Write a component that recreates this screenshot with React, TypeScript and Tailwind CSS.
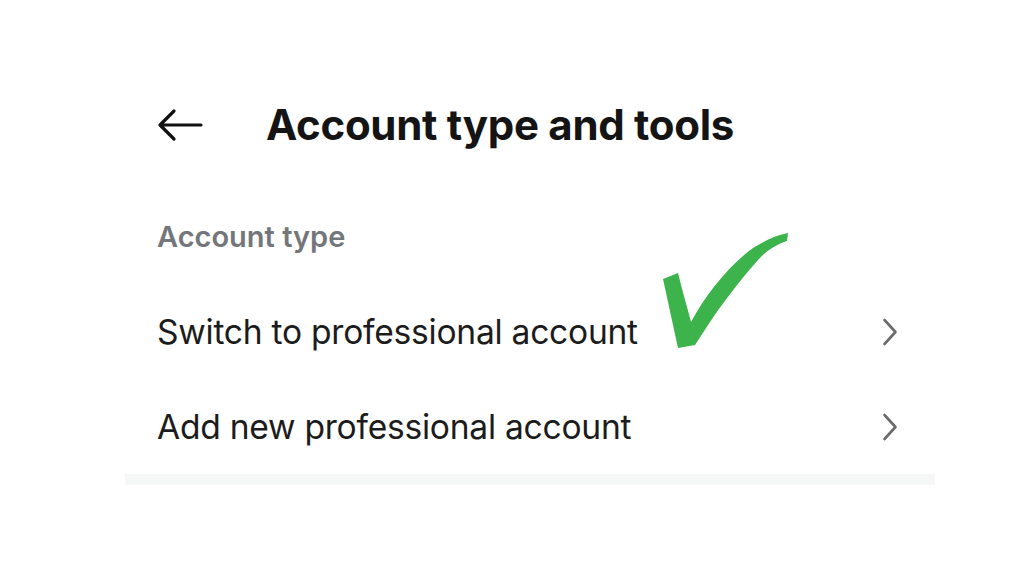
import React from "react";

function Chevron() {
  return (
    <svg width="16" height="28" viewBox="0 0 16 28" fill="none">
      <path d="M2.5 2 L13.5 14 L2.5 26" stroke="#6b6b6b" strokeWidth="2.6" strokeLinecap="round" strokeLinejoin="round" />
    </svg>
  );
}

function Row({ label }: { label: string }) {
  return (
    <div className="flex h-[95px] items-center justify-between pr-[126px]">
      <span className="text-[33.6px] leading-none text-[#1c1c1c] tracking-[-0.25px]">{label}</span>
      <Chevron />
    </div>
  );
}

export default function App() {
  return (
    <div
      className="relative h-[576px] w-[1024px] overflow-hidden bg-white"
      style={{ fontFamily: "Inter, 'Noto Sans', sans-serif" }}
    >
      <div className="flex flex-col pl-[157px]">
        <div className="flex h-[284px] flex-col">
          <div className="mt-[100px] flex h-[50px] items-center">
            <svg width="46" height="34" viewBox="0 0 46 34" fill="none">
              <path d="M44 17 H3 M17 3 L3 17 L17 31" stroke="#111" strokeWidth="3.2" strokeLinecap="round" strokeLinejoin="round" />
            </svg>
            <h1 className="ml-[63px] text-[42px] font-bold leading-none text-[#141414] tracking-[-0.3px]">
              Account type and tools
            </h1>
          </div>
          <div className="mt-[72px] text-[29px] font-semibold leading-none text-[#73777b]">Account type</div>
        </div>
        <div>
          <Row label="Switch to professional account" />
          <Row label="Add new professional account" />
        </div>
      </div>
      <div className="ml-[125px] h-[11px] w-[810px] bg-[#f6f8f8]" />
      <svg
        className="absolute left-[660px] top-[230px]"
        width="132"
        height="124"
        viewBox="0 0 132 124"
      >
        <path
          d="M3 49 L18 43 C22 60 27 76 31 92 C45 66 68 36 93 18 C106 10 117 5 128 3 L127 11 C115 15 105 22 98 30 C82 48 64 71 50 92 L35 115 L18 118 C13 95 8 72 3 49 Z"
          fill="#3cb44b"
        />
      </svg>
    </div>
  );
}
